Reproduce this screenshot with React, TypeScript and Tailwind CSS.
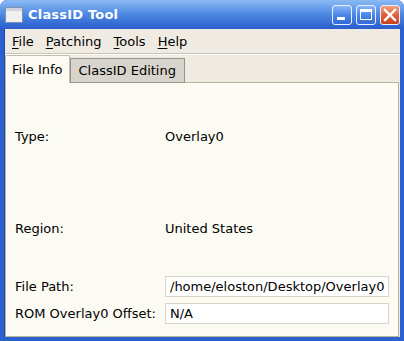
import React from "react";

const font = { fontFamily: '"DejaVu Sans", "Liberation Sans", sans-serif' };

function MenuItem({ first, rest }: { first: string; rest: string }) {
    return (
        <span className="px-[6px] text-[13px] text-black">
            <span className="underline underline-offset-[2px]">{first}</span>
            {rest}
        </span>
    );
}

function TitleButton({ kind }: { kind: "min" | "max" | "close" }) {
    const bg =
        kind === "close"
            ? "bg-gradient-to-b from-[#f0a080] via-[#e0603a] to-[#c8401e]"
            : "bg-gradient-to-b from-[#8ab8f8] via-[#4a86e8] to-[#3568d8]";
    return (
        <div className={`w-[20px] h-[20px] rounded-[3px] border border-[#e8f0ff] ${bg} flex items-center justify-center`}>
            {kind === "min" && <div className="w-[8px] h-[3px] bg-white mt-[8px] -ml-[2px]" />}
            {kind === "max" && <div className="w-[12px] h-[11px] border border-white border-t-[3px]" />}
            {kind === "close" && (
                <svg width="14" height="14" viewBox="0 0 14 14">
                    <path d="M2 2 L12 12 M12 2 L2 12" stroke="white" strokeWidth="2.4" strokeLinecap="square" />
                </svg>
            )}
        </div>
    );
}

export default function App() {
    return (
        <div style={font} className="w-[404px] h-[341px] flex flex-col bg-[#2c5fd0] rounded-t-[7px] overflow-hidden">
            {/* title bar */}
            <div className="h-[29px] flex items-center pl-[5px] pr-[4px] bg-gradient-to-b from-[#8cbaf4] via-[#4c88e2] to-[#2a5ccc]">
                <div className="w-[18px] h-[16px] bg-[#f0f0f0] border border-[#8090b0] flex flex-col">
                    <div className="h-[3px] bg-[#d0d4dc]" />
                </div>
                <span className="ml-[5px] text-white font-bold text-[13px] tracking-[0.2px]">ClassID Tool</span>
                <div className="ml-auto flex gap-[4px]">
                    <TitleButton kind="min" />
                    <TitleButton kind="max" />
                    <TitleButton kind="close" />
                </div>
            </div>

            {/* client area */}
            <div className="flex-1 mx-[4px] mb-[4px] bg-[#efebe2] flex flex-col border-l border-[#1c48a8]">
                <div className="h-[24px] flex items-center pl-[1px] pt-[2px]">
                    <MenuItem first="F" rest="ile" />
                    <MenuItem first="P" rest="atching" />
                    <MenuItem first="T" rest="ools" />
                    <MenuItem first="H" rest="elp" />
                </div>
                <div className="h-[2px] border-t border-[#c8c4b8] border-b border-b-white" />

                {/* tabs */}
                <div className="flex items-end h-[28px] -mb-[1px] relative z-10">
                    <div className="h-[28px] px-[6px] flex items-center bg-[#fbfaf3] border border-b-0 border-[#c0bcb0] rounded-t-[2px] text-[13px] text-black">
                        File Info
                    </div>
                    <div className="h-[25px] px-[8px] flex items-center bg-[#d6d4cc] border border-[#949488] text-[13px] text-black">
                        ClassID Editing
                    </div>
                </div>

                {/* panel */}
                <div className="flex-1 bg-[#fbfaf3] border border-[#b8b49a] mr-[1px] flex flex-col text-[13px] text-black">
                    <div className="mt-[44px] h-[20px] flex items-center">
                        <span className="w-[159px] pl-[9px]">Type:</span>
                        <span>Overlay0</span>
                    </div>
                    <div className="mt-[72px] h-[20px] flex items-center">
                        <span className="w-[159px] pl-[9px]">Region:</span>
                        <span>United States</span>
                    </div>
                    <div className="mt-[37px] h-[21px] flex items-center">
                        <span className="w-[159px] pl-[9px]">File Path:</span>
                        <div className="w-[224px] h-[21px] bg-white border border-[#d8d4c8] flex items-center px-[4px]">
                            /home/eloston/Desktop/Overlay0
                        </div>
                    </div>
                    <div className="mt-[6px] h-[21px] flex items-center">
                        <span className="w-[159px] pl-[9px]">ROM Overlay0 Offset:</span>
                        <div className="w-[224px] h-[21px] bg-white border border-[#d8d4c8] flex items-center px-[4px]">
                            N/A
                        </div>
                    </div>
                </div>
            </div>
        </div>
    );
}
